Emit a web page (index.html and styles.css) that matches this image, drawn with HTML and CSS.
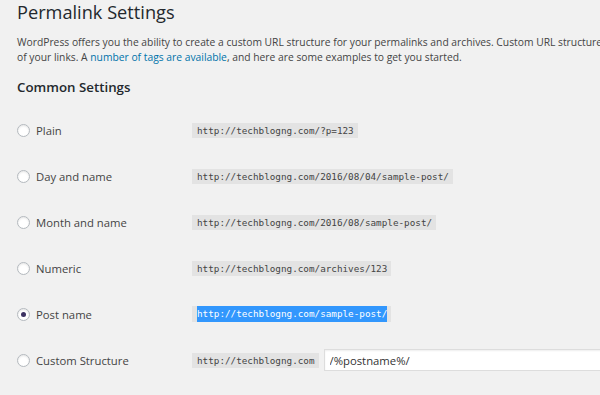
FILE: index.html
```html
<!DOCTYPE html>
<html lang="en">
<head>
    <meta charset="UTF-8">
    <meta name="viewport" content="width=device-width, initial-scale=1.0">
    <title>Permalink Settings</title>
    <link rel="stylesheet" href="styles.css">
</head>
<body>
    <div class="wrap">
        <h1>Permalink Settings</h1>
        <p class="intro">WordPress offers you the ability to create a custom URL structure for your permalinks and archives. Custom URL structures can improve the aesthetics, usability, and forward-compatibility<br>of your links. A <a href="#">number of tags are available</a>, and here are some examples to get you started.</p>

        <h2>Common Settings</h2>

        <!-- Permalink options -->
        <div class="options">
            <div class="option">
                <label class="choice"><span class="radio"></span>Plain</label>
                <code>http://techblogng.com/?p=123</code>
            </div>
            <div class="option">
                <label class="choice"><span class="radio"></span>Day and name</label>
                <code>http://techblogng.com/2016/08/04/sample-post/</code>
            </div>
            <div class="option">
                <label class="choice"><span class="radio"></span>Month and name</label>
                <code>http://techblogng.com/2016/08/sample-post/</code>
            </div>
            <div class="option">
                <label class="choice"><span class="radio"></span>Numeric</label>
                <code>http://techblogng.com/archives/123</code>
            </div>
            <div class="option">
                <label class="choice"><span class="radio checked"></span>Post name</label>
                <code><span class="selected">http://techblogng.com/sample-post/</span></code>
            </div>
            <div class="option">
                <label class="choice"><span class="radio"></span>Custom Structure</label>
                <div class="custom">
                    <code>http://techblogng.com</code>
                    <input type="text" class="structure" value="/%postname%/">
                </div>
            </div>
        </div>
    </div>
</body>
</html>
```

FILE: styles.css
```css
* {
    box-sizing: border-box;
    margin: 0;
    padding: 0;
}

body {
    background-color: #f1f1f1;
    color: #444444;
    font-family: "Open Sans", sans-serif;
    overflow: hidden;
}

.wrap {
    padding-left: 17px;
    width: 1000px;
}

h1 {
    font-size: 18.2px;
    font-weight: 400;
    line-height: 24px;
    color: #23282d;
}

.intro {
    margin-top: 11px;
    font-size: 10.3px;
    line-height: 15px;
    white-space: nowrap;
}

.intro a {
    color: #0073aa;
    text-decoration: none;
}

h2 {
    margin-top: 12px;
    font-size: 13.3px;
    font-weight: 600;
    line-height: 20px;
    color: #23282d;
}

.options {
    margin-top: 10px;
}

.option {
    display: grid;
    grid-template-columns: 175px 1fr;
    align-items: center;
    height: 46px;
}

.choice {
    display: flex;
    align-items: center;
    gap: 6px;
    font-size: 11.3px;
}

.radio {
    width: 13px;
    height: 13px;
    border: 1px solid #b4b9be;
    border-radius: 50%;
    background-color: #ffffff;
    box-shadow: inset 0 1px 2px rgba(0, 0, 0, 0.1);
    display: flex;
    align-items: center;
    justify-content: center;
}

.radio.checked::before {
    content: '';
    width: 5px;
    height: 5px;
    border-radius: 50%;
    background-color: #3c3162;
}

code {
    justify-self: start;
    background-color: #e3e3e3;
    font-family: "DejaVu Sans Mono", monospace;
    font-size: 9.3px;
    line-height: 15px;
    padding: 0 4px 0 5px;
    color: #444444;
}

.selected {
    background-color: #3297fd;
    color: #ffffff;
    display: inline-block;
    line-height: 16px;
}

.custom {
    display: flex;
    align-items: center;
    gap: 5px;
}

.structure {
    width: 320px;
    height: 22px;
    border: 1px solid #dddddd;
    box-shadow: inset 0 1px 2px rgba(0, 0, 0, 0.07);
    background-color: #ffffff;
    font-family: "Open Sans", sans-serif;
    font-size: 11.3px;
    color: #333333;
    padding: 0 5px;
    outline: none;
}
```
